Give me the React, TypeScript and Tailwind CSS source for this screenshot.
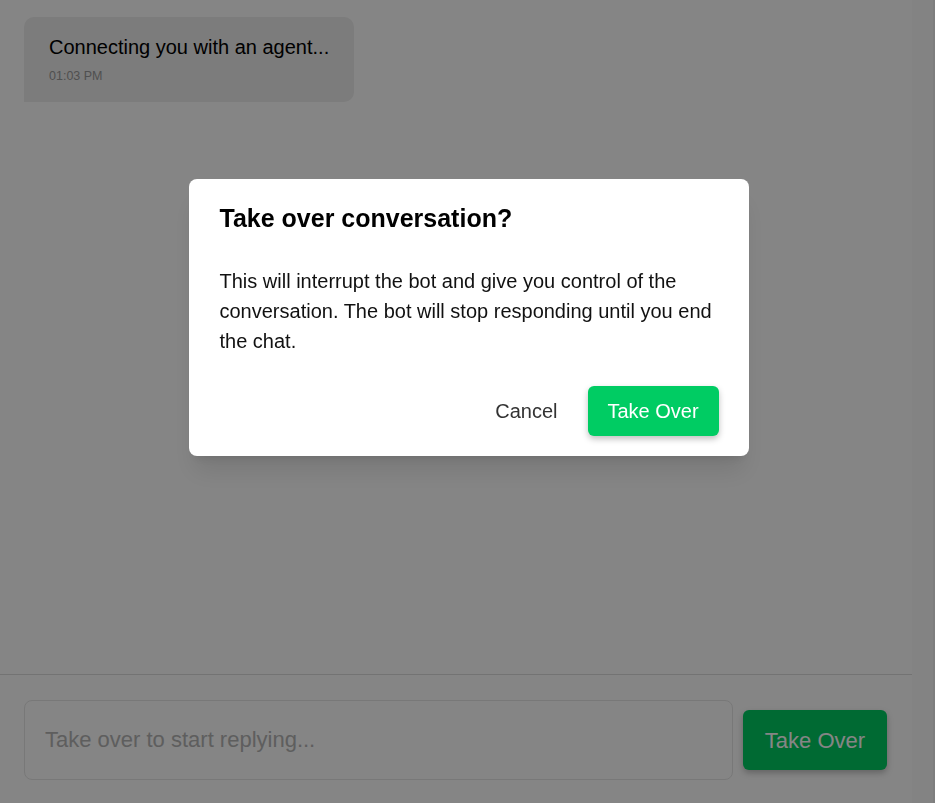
import { useState } from "react";

const font = { fontFamily: '"Liberation Sans", Arial, sans-serif' };

function MessageBubble({ text, time }: { text: string; time: string }) {
  return (
    <div className="inline-flex flex-col rounded-[10px] rounded-bl-none bg-[#ededed] px-[25px] pt-[15px] pb-[17px]">
      <span className="text-[20px] leading-[30px] text-black">{text}</span>
      <span className="mt-[5px] text-[12.5px] leading-[18px] text-[#999]">{time}</span>
    </div>
  );
}

function TakeOverDialog({ onClose }: { onClose: () => void }) {
  return (
    <div className="fixed inset-0 z-50 flex items-start justify-center bg-black/[0.48] pt-[179px] pl-[2px]">
      <div className="w-[560px] rounded-[8px] bg-white pl-[31px] pr-[30px] pt-[24px] pb-[20px] shadow-xl">
        <h2 className="text-[25px] font-bold leading-[31px] text-black">
          Take over conversation?
        </h2>
        <p className="mt-[32px] text-[20px] leading-[30px] text-[#111]">
          This will interrupt the bot and give you control of the conversation. The bot will
          stop responding until you end the chat.
        </p>
        <div className="mt-[30px] flex items-center justify-end gap-[10px]">
          <button
            onClick={onClose}
            className="h-[50px] px-[20px] text-[20px] text-[#333]"
          >
            Cancel
          </button>
          <button
            onClick={onClose}
            className="h-[50px] w-[131px] rounded-[6px] bg-[#00cc63] text-[20px] text-white shadow-[0_3px_6px_rgba(0,0,0,0.25)]"
          >
            Take Over
          </button>
        </div>
      </div>
    </div>
  );
}

export default function App() {
  const [open, setOpen] = useState(true);

  return (
    <div className="flex h-[803px] w-[935px] overflow-hidden bg-white" style={font}>
      <div className="flex min-w-0 flex-1 flex-col">
        <div className="flex-1 px-[24px] pt-[17px]">
          <MessageBubble text="Connecting you with an agent..." time="01:03 PM" />
        </div>
        <div className="flex items-center gap-[10px] border-t border-[#dcdcdc] pl-[24px] pr-[25px] pt-[25px] pb-[23px]">
          <input
            disabled
            placeholder="Take over to start replying..."
            className="h-[80px] min-w-0 flex-1 rounded-[8px] border border-[#e6e6e6] bg-white px-[20px] text-[22px] placeholder:text-[#b5b5b5]"
            style={font}
          />
          <button
            onClick={() => setOpen(true)}
            className="h-[60px] w-[144px] rounded-[6px] bg-[#00cc63] text-[22px] text-white shadow-[0_3px_6px_rgba(0,0,0,0.25)]"
          >
            Take Over
          </button>
        </div>
      </div>
      <div className="flex w-[23px] shrink-0">
        <div className="w-[21px] bg-[#fbfbfb]" />
        <div className="w-[2px] bg-[#f2f2f2]" />
      </div>
      {open && <TakeOverDialog onClose={() => setOpen(false)} />}
    </div>
  );
}
